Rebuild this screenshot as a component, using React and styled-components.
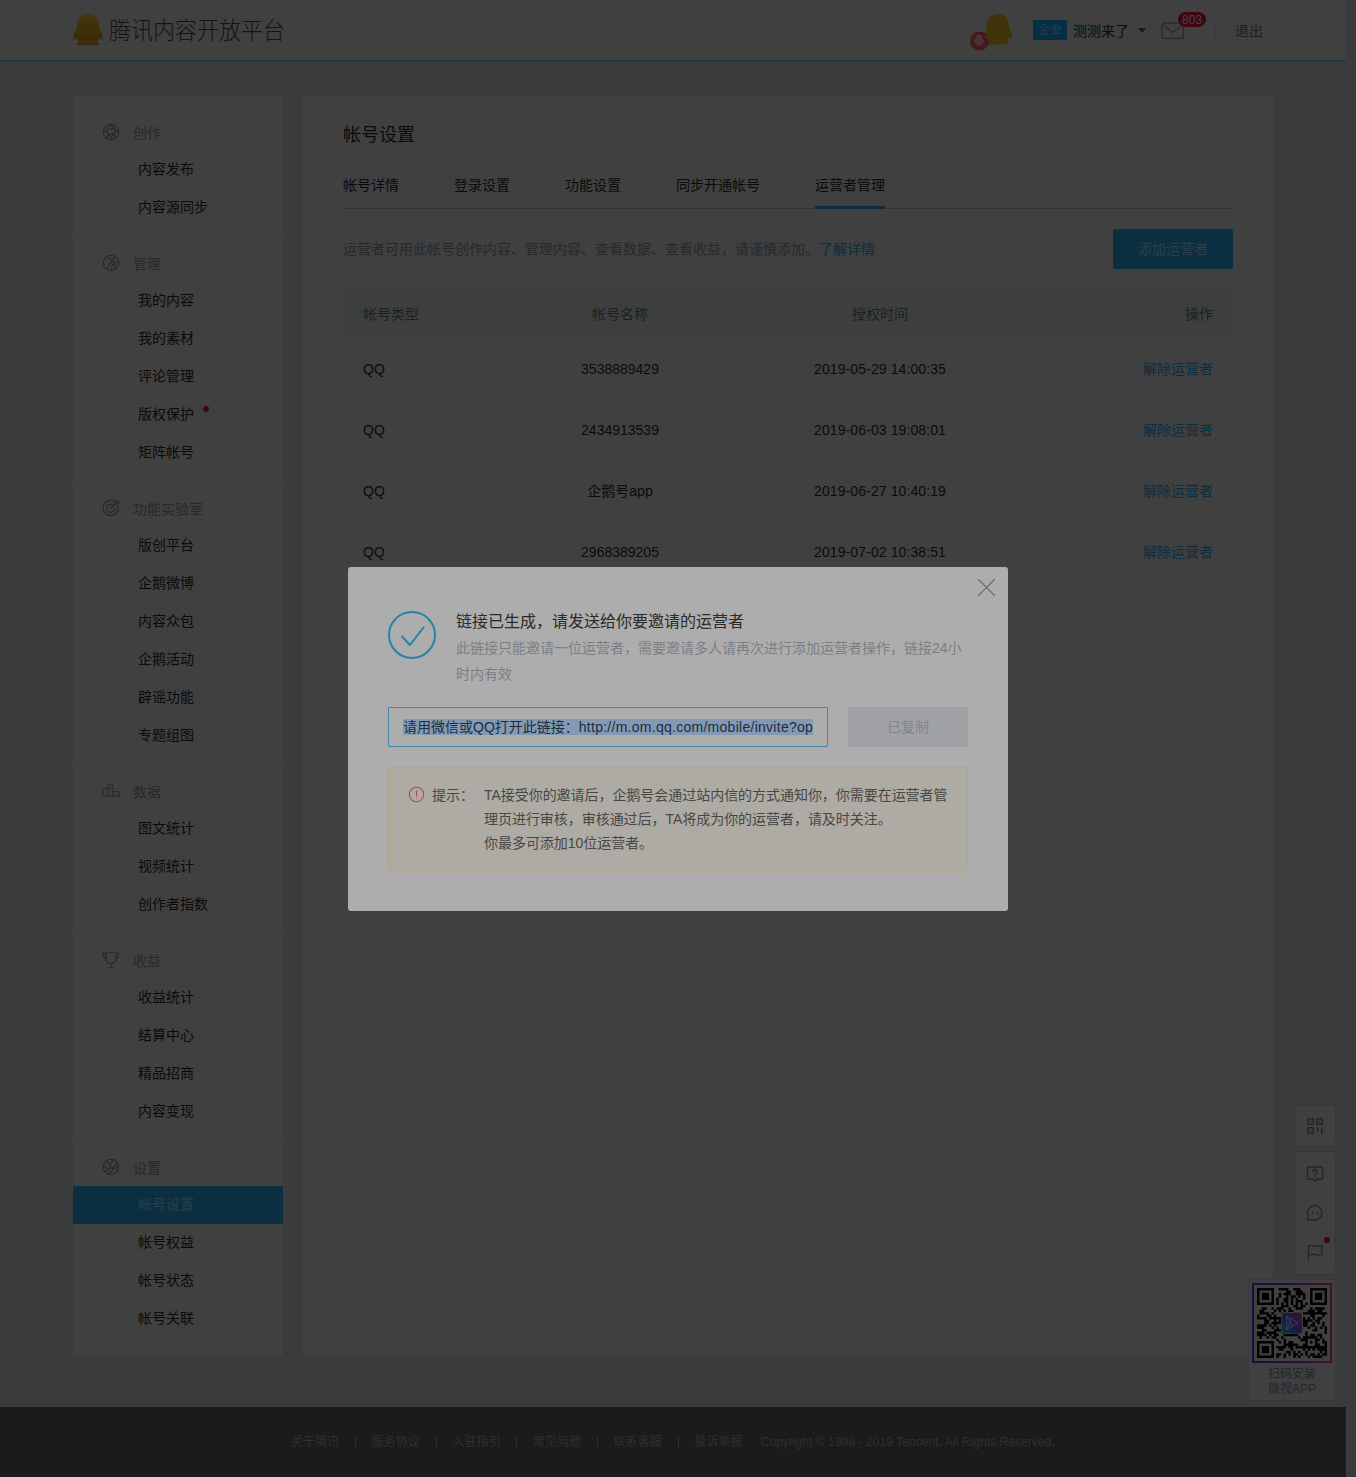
import React from "react";
import styled, { createGlobalStyle, css } from "styled-components";

const c = {
  page: "#393b3d",
  card: "#404040",
  line: "#3a3b3c",
  text: "#0b0b0c",
  sub: "#1e1f1f",
  muted: "#26292d",
  brand: "#0b2f40",
  link: "#0a2e42",
  red: "#3f0610",
};

const GlobalStyle = createGlobalStyle`
  * { box-sizing: border-box; }
  body {
    margin: 0;
    background: ${c.page};
    font-family: "Liberation Sans", "Noto Sans CJK SC", sans-serif;
    font-size: 14px;
    color: ${c.text};
  }
  ul { list-style: none; margin: 0; padding: 0; }
`;

const Page = styled.div`
  position: relative;
  width: 1356px;
  height: 1477px;
  padding-right: 10px;
  display: flex;
  flex-direction: column;
  overflow: hidden;
`;

/* ---------- header ---------- */
const Header = styled.header`
  height: 61px;
  flex: none;
  background: ${c.card};
  border-bottom: 1px solid #1f363f;
  box-shadow: 0 1px 1px #35393c;
  padding: 0 73px;
  display: flex;
  align-items: center;
  justify-content: space-between;
`;
const Brand = styled.div`
  display: flex;
  align-items: center;
  gap: 6px;
`;
const BrandName = styled.span`
  font-family: "Noto Sans CJK SC", sans-serif;
  font-weight: 300;
  font-size: 22px;
  line-height: 30px;
  margin-bottom: 4px;
  color: #141414;
  transform: scaleY(1.06);
`;
const UserBar = styled.div`
  display: flex;
  align-items: center;
  height: 60px;
  padding-right: 10px;
`;
const AvatarBox = styled.span`
  display: flex;
  padding-top: 4px;
`;
const Tag = styled.span`
  width: 34px;
  height: 20px;
  line-height: 20px;
  margin: 0 6px 0 20px;
  text-align: center;
  font-size: 12px;
  background: #052f44;
  color: #2a3f49;
`;
const UserName = styled.span`
  line-height: 20px;
  padding-top: 1px;
`;
const Caret = styled.i`
  margin: 0 15px 0 9px;
  border: 4px solid transparent;
  border-top: 5px solid #1a1a1a;
  border-bottom: 0;
`;
const Mail = styled.span`
  position: relative;
  display: flex;
  width: 24px;
  padding-top: 1px;
`;
const MailCount = styled.b`
  position: absolute;
  left: 17px;
  top: -9px;
  width: 28px;
  height: 15px;
  border-radius: 8px;
  background: ${c.red};
  color: #4b4042;
  font-weight: 400;
  font-size: 12px;
  line-height: 16px;
  text-align: center;
`;
const Divider = styled.i`
  width: 1px;
  height: 18px;
  margin: 0 19px 0 30px;
  background: #38393a;
`;
const Logout = styled.span`
  line-height: 20px;
  padding-top: 1px;
  color: #1d1d1d;
`;

/* ---------- body ---------- */
const Body = styled.div`
  flex: none;
  display: flex;
  gap: 20px;
  width: 1200px;
  height: 1261px;
  margin: 34px 0 51px 73px;
`;
const Side = styled.nav`
  width: 210px;
  padding-top: 10px;
  background: ${c.card};
  border-radius: 2px;
`;
const Group = styled.section`
  padding-bottom: 8px;
  border-bottom: 1px solid ${c.line};
  &:last-child { border-bottom: 0; }
`;
const GroupTitle = styled.div`
  display: flex;
  align-items: center;
  gap: 12px;
  height: 46px;
  padding: 8px 0 0 29px;
  color: ${c.muted};
  svg { margin-right: 1px; }
`;
const SideItem = styled.li`
  height: 38px;
  line-height: 36px;
  padding-left: 65px;
  ${(p) => p.$active && css`
    background: ${c.brand};
    color: #2a3f49;
  `}
`;
const Dot = styled.i`
  display: inline-block;
  width: 6px;
  height: 6px;
  border-radius: 3px;
  margin-left: 9px;
  vertical-align: 7px;
  background: ${c.red};
`;

const Main = styled.main`
  flex: 1;
  padding: 25px 40px;
  background: ${c.card};
  border-radius: 2px;
`;
const Title = styled.h1`
  margin: 0;
  font-size: 18px;
  font-weight: 400;
  line-height: 30px;
`;
const Tabs = styled.div`
  display: flex;
  gap: 55px;
  height: 59px;
  border-bottom: 1px solid #343536;
`;
const Tab = styled.span`
  height: 59px;
  padding-top: 22px;
  line-height: 26px;
  ${(p) => p.$active && css`border-bottom: 3px solid #0d2c3c;`}
`;
const Notice = styled.div`
  display: flex;
  justify-content: space-between;
  align-items: center;
  margin: 20px 0 21px;
  color: ${c.muted};
`;
const NoticeText = styled.span`
  padding-bottom: 3px;
`;
const Link = styled.a`
  color: ${c.link};
`;
const AddButton = styled.button`
  width: 120px;
  height: 40px;
  padding: 0 0 2px;
  border: 0;
  border-radius: 2px;
  font: inherit;
  background: ${c.brand};
  color: #2a3f49;
`;
const Row = styled.div`
  display: grid;
  grid-template-columns: 147px 260px 260px 223px;
  align-items: center;
  height: 61px;
  border-bottom: 1px solid #3c3d3d;
  ${(p) => p.$head && css`
    height: 49px;
    background: #3c3f3e;
    border-color: #3e3f3f;
    color: ${c.sub};
  `}
`;
const Cell = styled.span`
  padding: 0 20px;
  line-height: 20px;
  text-align: ${(p) => p.$align || "left"};
  letter-spacing: ${(p) => (p.$wide ? "0.1px" : "normal")};
`;

/* ---------- footer ---------- */
const Footer = styled.footer`
  flex: 1;
  display: flex;
  align-items: center;
  padding: 0 0 0 291px;
  background: #1a1b1c;
  color: #2f3031;
  font-size: 12px;
  line-height: 16px;
`;
const FooterLink = styled.span`
  width: 80.7px;
  display: flex;
  align-items: center;
  gap: 16px;
  &::after {
    content: "";
    width: 1px;
    height: 10px;
    background: #2f3031;
  }
  &:nth-child(6) { width: 66px; }
  &:nth-child(6)::after { display: none; }
`;
const Copyright = styled.span`
  letter-spacing: 0.07px;
`;

/* ---------- floating tools ---------- */
const Tools = styled.aside`
  position: absolute;
  right: 21px;
  top: 1106px;
  display: flex;
  flex-direction: column;
  align-items: flex-end;
  gap: 6px;
`;
const ToolBox = styled.div`
  position: relative;
  width: 40px;
  background: ${c.card};
  border-radius: 2px;
  box-shadow: 0 0 1px 1px #37393b;
  display: flex;
  flex-direction: column;
  align-items: center;
  justify-content: space-around;
  height: ${(p) => p.$h}px;
  padding: ${(p) => (p.$h > 40 ? "2px 0" : 0)};
`;
const ToolDot = styled.i`
  position: absolute;
  right: 5px;
  top: 85px;
  width: 6px;
  height: 6px;
  border-radius: 3px;
  background: ${c.red};
`;
const QrCard = styled.div`
  width: 86px;
  height: 120px;
  padding: 3px;
  background: #3f4041;
  box-shadow: 0 0 1px 1px #37393b;
  color: #242627;
  font-size: 12px;
  line-height: 15px;
  text-align: center;
`;
const QrFrame = styled.div`
  width: 80px;
  height: 80px;
  padding: 2px;
  margin-bottom: 4px;
  background: linear-gradient(90deg, #160f42, #2a1035 50%, #431227);
`;
const QrInner = styled.div`
  display: flex;
  width: 76px;
  height: 76px;
  padding: 3px;
  background: ${c.card};
`;

/* ---------- dialog ---------- */
const Dialog = styled.div`
  position: absolute;
  left: 348px;
  top: 567px;
  width: 660px;
  height: 344px;
  padding: 40px;
  background: #adadad;
  border-radius: 3px;
`;
const Close = styled.span`
  position: absolute;
  right: 12px;
  top: 11px;
  display: flex;
`;
const Success = styled.div`
  display: flex;
  gap: 20px;
  height: 100px;
  padding-top: 4px;
`;
const SuccessText = styled.div`
  flex: 1;
  font-size: 14px;
  line-height: 26px;
  color: #7b7f85;
  margin-top: -2px;
`;
const SuccessTitle = styled.div`
  font-size: 16px;
  line-height: 26px;
  color: #2a2a2a;
`;
const CopyRow = styled.div`
  display: flex;
  gap: 20px;
`;
const LinkField = styled.div`
  width: 440px;
  height: 40px;
  padding: 11px 14px;
  border: 1px solid #4587a8;
  border-radius: 1px;
  color: #1f2c3c;
  white-space: nowrap;
`;
const Selected = styled.span`
  display: block;
  width: 410px;
  height: 16px;
  line-height: 16px;
  background: #849ab4;
`;
const Url = styled.span`
  letter-spacing: 0.27px;
`;
const Copied = styled.div`
  width: 120px;
  height: 40px;
  line-height: 40px;
  text-align: center;
  background: #a0a2a5;
  color: #83868b;
  border-radius: 1px;
`;
const Tip = styled.div`
  display: flex;
  height: 104px;
  margin-top: 20px;
  padding: 15px 0 0 20px;
  border: 1px solid #b0a788;
  background: #adaba4;
  color: #484743;
  line-height: 24px;
`;
const TipIcon = styled.span`
  display: flex;
  margin: 3px 7px 0 -1px;
`;
const TipLabel = styled.span`
  width: 52px;
`;
const TipText = styled.div`
  width: 472px;
  letter-spacing: -0.04px;
`;

/* ---------- drawings ---------- */
const Svg = ({ size = 18, w, h, box, color = "#272829", sw = 1.1, children }) => (
  <svg width={w || size} height={h || size} viewBox={box || `0 0 ${w || size} ${h || size}`} fill="none" stroke={color} strokeWidth={sw} strokeLinecap="round" strokeLinejoin="round">
    {children}
  </svg>
);

const Penguin = () => (
  <svg width="30" height="32" viewBox="0 0 30 32">
    <defs>
      <linearGradient id="gold" x1="0" x2="0" y1="0" y2="1">
        <stop offset="0" stopColor="#46390c" />
        <stop offset=".3" stopColor="#403307" />
        <stop offset="1" stopColor="#3b2a07" />
      </linearGradient>
    </defs>
    <path fill="url(#gold)" d="M15 0C8.500 0 4.500 4.500 4.200 10.500C4.100 13 3.700 15 2.600 17C1 20 0 22.500 .3 25.500C1.200 26.500 2.500 25.200 3.600 24C4.200 26 5 27.300 6.200 28.400C3.600 29 3.500 31 5 31.200H25C26.500 31 26.400 29 23.800 28.400C25 27.300 25.800 26 26.400 24C27.500 25.200 28.800 26.500 29.700 25.500C30 22.500 29 20 27.400 17C26.300 15 25.900 13 25.800 10.500C25.500 4.500 21.500 0 15 0Z" />
  </svg>
);

const Avatar = () => (
  <svg width="44" height="38" viewBox="0 0 44 38">
    <path fill="#403307" d="M29 1C22 1 18.500 6 18 12C17.700 17 15.500 20 15 25C15.500 29 18 30.500 20 31C18.500 32 19.500 33 21 31.500H37C40 32 39 30 37.500 29.500C39 28 39.700 27 40 24C41.500 26 43 27 43 25C43 21 41.500 18 40.500 15C40 6 36 1 29 1Z" />
    <circle cx="10.500" cy="28" r="9.500" fill="#43191c" />
    <path fill="#4a3233" d="M10 21.500c-2.300 0-3.400 1.500-3.300 3.700-1.400 1.400-2.300 3-2 4.800l1.300-.6c.2 2 1.500 3.600 4 3.600s4-1.400 4.200-3.600l1.200.4c.2-1.800-.8-3.300-2-4.600 0-2.200-1.100-3.700-3.400-3.700Z" />
    <path stroke="#4a3233" d="M15.500 23.500h3v4" fill="none" />
  </svg>
);

const icons = {
  football: (
    <Svg>
      <circle cx="9" cy="9" r="7.700" />
      <path d="M9 1.500L6.500 4.500 9 7l2.500-2.500ZM6.500 4.500L4.500 7.500 6 11h6l1.500-3.500-2-3M4.500 7.500L1.500 9M13.500 7.500l3 1.500M6 11l-1.500 4M12 11l1.500 4M6 11l3 3 3-3M9 14v2.500" />
    </Svg>
  ),
  basketball: (
    <Svg>
      <circle cx="9" cy="9" r="7.700" />
      <path d="M4.800 15.200L12.800 2.600M3.800 3.600C8 3 11.500 6 13.800 15M9.500 16.500C9 12 11.500 8.300 16.200 7" />
    </Svg>
  ),
  target: (
    <Svg>
      <path d="M12.500 2.700A7.500 7.500 0 1 0 15.800 7" />
      <path d="M10.700 5.900A4 4 0 1 0 12.600 8.500" />
      <path d="M8.500 10L13 5M13 5l.2-2.500L15 1.200l.4 1.700 1.700.4-1.600 1.800Z" />
    </Svg>
  ),
  podium: (
    <Svg>
      <path d="M1 14.300V6.500h5v7.800ZM6 14.300V2.800h5v11.500ZM11 14.300V9.500h6v4.800ZM8.500 5v3" />
    </Svg>
  ),
  cup: (
    <Svg>
      <path d="M4 1.300h10v6.200a5 5 0 0 1-10 0ZM4 2.300H1.200c-.2 3 .8 4.700 3 5.200M14 2.300h2.800c.2 3-.8 4.700-3 5.200M9 12.500v4M5.800 16.700h6.400" />
    </Svg>
  ),
  volleyball: (
    <Svg>
      <circle cx="9" cy="9" r="7.700" />
      <path d="M8.500 9.500C8.500 6 9.500 3.500 12 2M8.500 9.500c3 1.500 5.500 1 8-1M8.500 9.500C7 12 5 13.500 2.800 13.800M4 3.500c2.500 1 4 3.200 4.500 6M10.500 10.300c2-1.500 3.500-3.500 4-5.800M11 10.200c-.5 2.500-2 4.700-4.500 6M1.500 8c2 .5 4 2 5.300 4" />
    </Svg>
  ),
};

const inFinder = (x, y) => x >= 0 && y >= 0 && x <= 6 && y <= 6;
const ring = (x, y) => Math.max(Math.abs(x - 3), Math.abs(y - 3)) !== 2;
const noise = (x, y) => {
  let h = (x * 374761393 + y * 668265263) | 0;
  h = Math.imul(h ^ (h >>> 13), 1274126177);
  return ((h ^ (h >>> 16)) >>> 0) % 100;
};

const qrModules = () => {
  const cells = [];
  for (let y = 0; y < 29; y++) {
    for (let x = 0; x < 29; x++) {
      let on = noise(x + 3, y + 7) < 50;
      if ((x < 8 && y < 8) || (x > 20 && y < 8) || (x < 8 && y > 20)) {
        on = [[x, y], [x - 22, y], [x, y - 22]].some(([a, b]) => inFinder(a, b) && ring(a, b));
      } else if (x >= 20 && x <= 24 && y >= 20 && y <= 24) {
        on = Math.max(Math.abs(x - 22), Math.abs(y - 22)) !== 1;
      } else if (x === 6 || y === 6) {
        on = (x + y) % 2 === 0;
      }
      if (on) cells.push(`M${x} ${y}h1.020v1.020h-1.020z`);
    }
  }
  return cells.join("");
};

const QrCode = () => (
  <svg width="70" height="70" viewBox="0 0 29 29">
    <defs>
      <linearGradient id="app" x1="0" x2="1" y1="1" y2="0">
        <stop offset="0" stopColor="#0b3242" />
        <stop offset=".5" stopColor="#1b1845" />
        <stop offset="1" stopColor="#46102a" />
      </linearGradient>
    </defs>
    <path d={qrModules()} fill="#020202" />
    <rect x="10" y="10" width="9" height="9" rx=".6" fill="#404040" />
    <rect x="10.400" y="10.400" width="8.200" height="8.200" rx=".5" fill="url(#app)" />
    <path d="M12.300 11.800v5.400l4.700-2.700zM12.300 17.200l2.300-5M12.300 11.800l2.500 4" fill="none" stroke="#30464f" strokeWidth=".4" />
  </svg>
);

/* ---------- data ---------- */
const groups = [
  ["football", "创作", ["内容发布", "内容源同步"]],
  ["basketball", "管理", ["我的内容", "我的素材", "评论管理", "版权保护", "矩阵帐号"]],
  ["target", "功能实验室", ["版创平台", "企鹅微博", "内容众包", "企鹅活动", "辟谣功能", "专题组图"]],
  ["podium", "数据", ["图文统计", "视频统计", "创作者指数"]],
  ["cup", "收益", ["收益统计", "结算中心", "精品招商", "内容变现"]],
  ["volleyball", "设置", ["帐号设置", "帐号权益", "帐号状态", "帐号关联"]],
];
const tabs = ["帐号详情", "登录设置", "功能设置", "同步开通帐号", "运营者管理"];
const rows = [
  ["3538889429", "2019-05-29 14:00:35"],
  ["2434913539", "2019-06-03 19:08:01"],
  ["企鹅号app", "2019-06-27 10:40:19"],
  ["2968389205", "2019-07-02 10:38:51"],
];
const footerLinks = ["关于腾讯", "服务协议", "入驻指引", "常见问题", "联系客服", "投诉举报"];

export default function App() {
  return (
    <Page>
      <GlobalStyle />
      <Header>
        <Brand>
          <Penguin />
          <BrandName>腾讯内容开放平台</BrandName>
        </Brand>
        <UserBar>
          <AvatarBox><Avatar /></AvatarBox>
          <Tag>企业</Tag>
          <UserName>测测来了</UserName>
          <Caret />
          <Mail>
            <Svg w={24} h={18} color="#2b2b2b" sw={1.4}>
              <rect x="1" y="1" width="21.500" height="15.500" rx="1.500" />
              <path d="M2.500 3l9.200 7.500L21 3" />
            </Svg>
            <MailCount>803</MailCount>
          </Mail>
          <Divider />
          <Logout>退出</Logout>
        </UserBar>
      </Header>

      <Body>
        <Side>
          {groups.map(([icon, title, items]) => (
            <Group key={title}>
              <GroupTitle>{icons[icon]}{title}</GroupTitle>
              <ul>
                {items.map((it) => (
                  <SideItem key={it} $active={it === "帐号设置"}>
                    {it}
                    {it === "版权保护" && <Dot />}
                  </SideItem>
                ))}
              </ul>
            </Group>
          ))}
        </Side>
        <Main>
          <Title>帐号设置</Title>
          <Tabs>
            {tabs.map((t) => (
              <Tab key={t} $active={t === "运营者管理"}>{t}</Tab>
            ))}
          </Tabs>
          <Notice>
            <NoticeText>
              运营者可用此帐号创作内容、管理内容、查看数据、查看收益，请谨慎添加。<Link>了解详情</Link>
            </NoticeText>
            <AddButton>添加运营者</AddButton>
          </Notice>
          <Row $head>
            <Cell>帐号类型</Cell>
            <Cell $align="center">帐号名称</Cell>
            <Cell $align="center">授权时间</Cell>
            <Cell $align="right">操作</Cell>
          </Row>
          {rows.map(([name, time]) => (
            <Row key={name}>
              <Cell>QQ</Cell>
              <Cell $align="center">{name}</Cell>
              <Cell $align="center" $wide>{time}</Cell>
              <Cell $align="right"><Link>解除运营者</Link></Cell>
            </Row>
          ))}
        </Main>
      </Body>

      <Footer>
        {footerLinks.map((f) => <FooterLink key={f}>{f}</FooterLink>)}
        <Copyright>Copyright © 1998 - 2019 Tencent. All Rights Reserved.</Copyright>
      </Footer>

      <Tools>
        <ToolBox $h={40}>
          <Svg size={18} color="#232425" sw={1.5}>
            <rect x="1.700" y="1.700" width="5.600" height="5.600" rx="1" />
            <rect x="10.700" y="1.700" width="5.600" height="5.600" rx="1" />
            <rect x="1.700" y="10.700" width="5.600" height="5.600" rx="1" />
            <path d="M4.500 4.500h.1M13.500 4.500h.1M4.500 13.500h.1M11.500 11v3M15.800 11v5.500" />
          </Svg>
        </ToolBox>
        <ToolBox $h={122}>
          <Svg size={18} color="#232425" sw={1.3}>
            <path d="M2.500 2h13a1 1 0 0 1 1 1v10a1 1 0 0 1-1 1h-4L9 16l-2.500-2h-4a1 1 0 0 1-1-1V3a1 1 0 0 1 1-1Z" />
            <path d="M7 6.500c0-2.700 4-2.700 4 0C11 8 9 8 9 9.700M9 11.700v.1" />
          </Svg>
          <Svg size={18} color="#232425" sw={1.3}>
            <path d="M1.500 15.800l1.300-3A7.200 7.200 0 1 1 6 15.400c-1.500.5-3 .4-4.500.4Z" />
            <path d="M6.800 8.700v.3M11.500 8.700v.3" strokeWidth="1.800" />
          </Svg>
          <Svg size={18} color="#232425" sw={1.3}>
            <path d="M2.500 16.500V3c4-2 7 1.700 13.500-.5v9c-6 2-9-1.500-13.500.5" />
          </Svg>
          <ToolDot />
        </ToolBox>
        <QrCard>
          <QrFrame><QrInner><QrCode /></QrInner></QrFrame>
          扫码安装<br />微视APP
        </QrCard>
      </Tools>

      <Dialog>
        <Close>
          <Svg size={19} color="#6c6c6c" sw={1.1}>
            <path d="M1.500 1.500l16 16M17.500 1.500l-16 16" />
          </Svg>
        </Close>
        <Success>
          <Svg size={48} color="#2583a7" sw={2}>
            <circle cx="24" cy="24" r="23" />
            <path d="M14 25.500l8 8.500L35.500 16.500" />
          </Svg>
          <SuccessText>
            <SuccessTitle>链接已生成，请发送给你要邀请的运营者</SuccessTitle>
            此链接只能邀请一位运营者，需要邀请多人请再次进行添加运营者操作，链接24小时内有效
          </SuccessText>
        </Success>
        <CopyRow>
          <LinkField>
            <Selected>请用微信或QQ打开此链接：<Url>http://m.om.qq.com/mobile/invite?op</Url></Selected>
          </LinkField>
          <Copied>已复制</Copied>
        </CopyRow>
        <Tip>
          <TipIcon>
            <Svg size={17} color="#ad4a50" sw={1.1}>
              <circle cx="8.500" cy="8.500" r="7.200" />
              <path d="M8.500 4.500v5.500M8.500 12.300v.2" />
            </Svg>
          </TipIcon>
          <TipLabel>提示：</TipLabel>
          <TipText>
            TA接受你的邀请后，企鹅号会通过站内信的方式通知你，你需要在运营者管理页进行审核，审核通过后，TA将成为你的运营者，请及时关注。<br />
            你最多可添加10位运营者。
          </TipText>
        </Tip>
      </Dialog>
    </Page>
  );
}
